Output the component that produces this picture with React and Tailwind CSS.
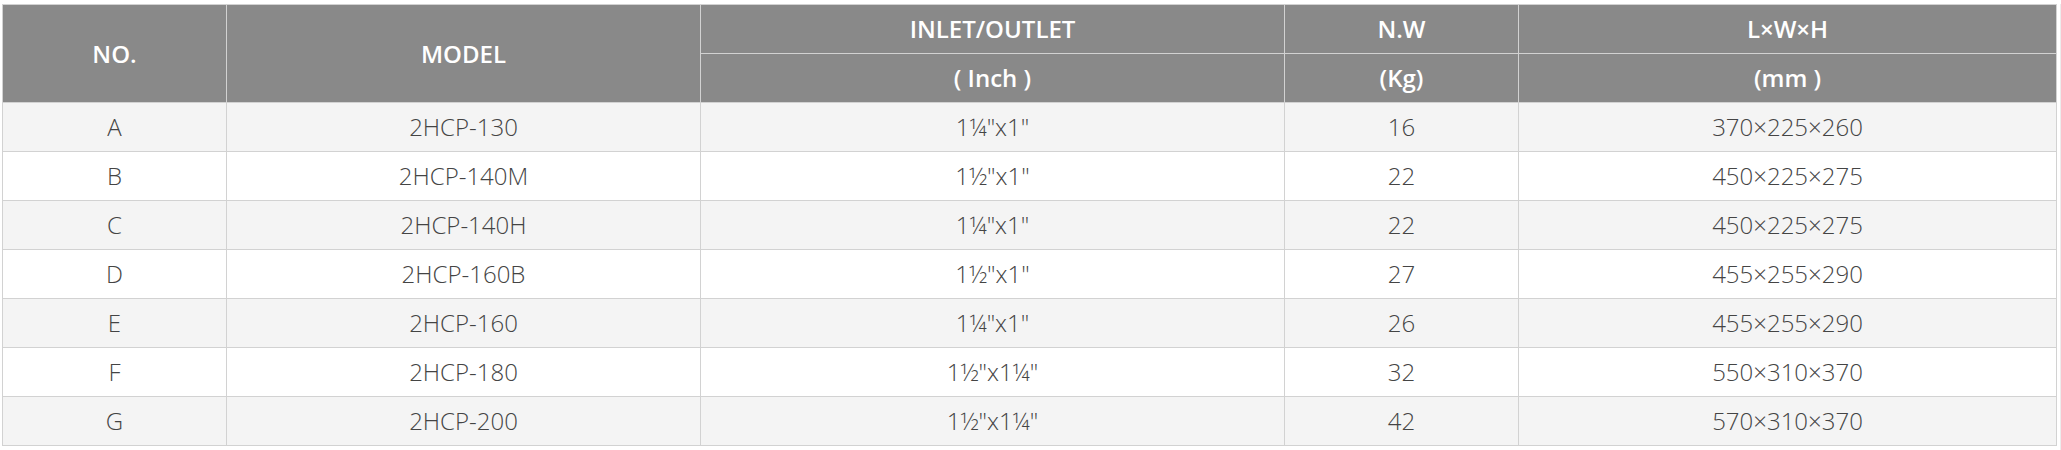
import React from 'react';

const rows = [
  ['A', '2HCP-130', '1¼"x1"', '16', '370×225×260'],
  ['B', '2HCP-140M', '1½"x1"', '22', '450×225×275'],
  ['C', '2HCP-140H', '1¼"x1"', '22', '450×225×275'],
  ['D', '2HCP-160B', '1½"x1"', '27', '455×255×290'],
  ['E', '2HCP-160', '1¼"x1"', '26', '455×255×290'],
  ['F', '2HCP-180', '1½"x1¼"', '32', '550×310×370'],
  ['G', '2HCP-200', '1½"x1¼"', '42', '570×310×370'],
];

export default function App() {
  const th = 'border border-[#d2d2d2] bg-[#898989] text-white font-semibold text-center align-middle h-[49px] p-0';
  const td = 'border border-[#d2d2d2] text-center align-middle h-[49px] p-0';

  return (
    <div className="w-[2061px] h-[450px] bg-white pt-[4px] pl-[2px] flex items-start" style={{ fontFamily: '"Open Sans", "Liberation Sans", sans-serif' }}>
      <table className="w-[2054px] table-fixed border-collapse text-[24px] leading-none">
        <colgroup>
          <col className="w-[224px]" />
          <col className="w-[474px]" />
          <col className="w-[584px]" />
          <col className="w-[234px]" />
          <col className="w-[538px]" />
        </colgroup>
        <thead>
          <tr>
            <th rowSpan={2} className={th}>NO.</th>
            <th rowSpan={2} className={th}>MODEL</th>
            <th className={th}>INLET/OUTLET</th>
            <th className={th}>N.W</th>
            <th className={th}>L×W×H</th>
          </tr>
          <tr>
            <th className={th}>( Inch )</th>
            <th className={th}>(Kg)</th>
            <th className={th}>(mm )</th>
          </tr>
        </thead>
        <tbody>
          {rows.map((r, i) => (
            <tr key={r[0]} className={i % 2 === 0 ? 'bg-[#f4f4f4]' : 'bg-white'}>
              {r.map((c, j) => (
                <td key={j} className={`${td} font-light text-[#444]`}>{c}</td>
              ))}
            </tr>
          ))}
        </tbody>
      </table>
      <div className="ml-[3px] w-px h-[446px] bg-[#ececec]" />
    </div>
  );
}
